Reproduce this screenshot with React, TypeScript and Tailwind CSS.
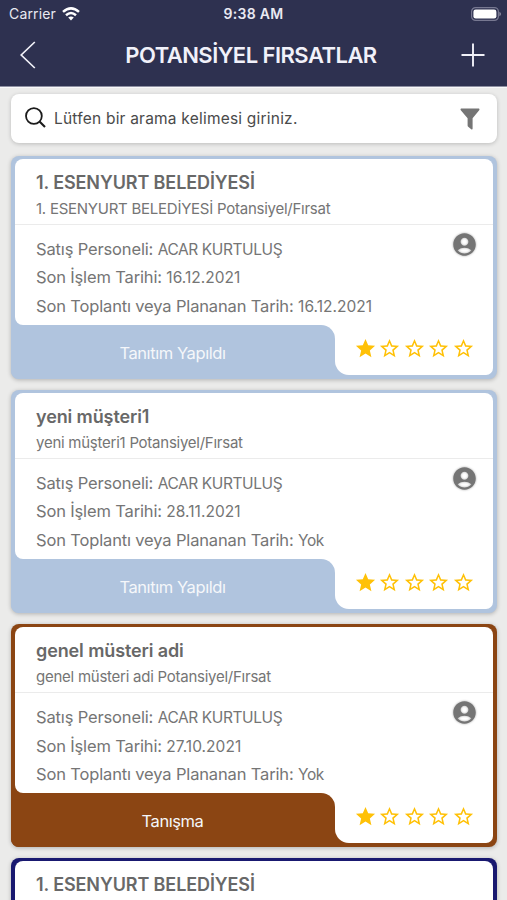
import { MdAccountCircle, MdStar, MdStarBorder } from 'react-icons/md';

type Opportunity = {
  title: string;
  person?: string;
  lastAction?: string;
  meeting?: string;
  status?: string;
  color: string;
};

const opportunities: Opportunity[] = [
  {
    title: '1. ESENYURT BELEDİYESİ',
    person: 'ACAR KURTULUŞ',
    lastAction: '16.12.2021',
    meeting: '16.12.2021',
    status: 'Tanıtım Yapıldı',
    color: 'bg-[#b0c4de]',
  },
  {
    title: 'yeni müşteri1',
    person: 'ACAR KURTULUŞ',
    lastAction: '28.11.2021',
    meeting: 'Yok',
    status: 'Tanıtım Yapıldı',
    color: 'bg-[#b0c4de]',
  },
  {
    title: 'genel müsteri adi',
    person: 'ACAR KURTULUŞ',
    lastAction: '27.10.2021',
    meeting: 'Yok',
    status: 'Tanışma',
    color: 'bg-[#8b4513]',
  },
  {
    title: '1. ESENYURT BELEDİYESİ',
    color: 'bg-[#191970]',
  },
];

function StatusBar() {
  return (
    <div className="relative flex h-[27px] items-center justify-between pl-[9px] pr-[6px] text-[14px] text-[#e9e9f2]">
      <div className="flex items-center gap-[6px]">
        <span className="tracking-[0.15px]">Carrier</span>
        <svg className="h-[14px] w-[18px]" viewBox="0 0 18 14" fill="none" stroke="white" strokeWidth="2.5">
          <path d="M1 4.9Q9-2.1 17 4.9" />
          <path d="M4 8.2Q9 3.8 14 8.2" />
          <path d="M9 13.5L6.2 10.6Q9 8.5 11.8 10.6Z" fill="white" stroke="none" />
        </svg>
      </div>
      <span className="absolute inset-x-0 text-center font-semibold tracking-[0.3px]">9:38 AM</span>
      <svg className="h-[14px] w-[30px]" viewBox="0 0 30 14">
        <rect x="0.6" y="0.6" width="26.8" height="12.8" rx="4" fill="none" stroke="#777891" strokeWidth="1.2" />
        <rect x="2.4" y="2.4" width="23" height="9.2" rx="2.3" fill="white" />
        <path d="M28.4 4.7Q30 5.4 30 7T28.4 9.3Z" fill="#8c8ca2" />
      </svg>
    </div>
  );
}

function Header() {
  return (
    <header className="h-[86px] bg-[#2e3150] shadow-[0_1px_0_#8e90a2,0_2px_0_#f8f8fa]">
      <StatusBar />
      <div className="flex h-[56px] items-center justify-between pl-[20px] pr-[22px]">
        <svg className="h-[28px] w-[16px]" viewBox="0 0 16 28" fill="none" stroke="#f1f1f8" strokeWidth="1.7">
          <path d="M14.8 1L1.2 14L14.8 27" />
        </svg>
        <h1 className="pl-[5px] text-[22px] font-semibold tracking-[-0.53px] text-[#f1f1fa]">POTANSİYEL FIRSATLAR</h1>
        <svg className="h-[24px] w-[24px]" viewBox="0 0 24 24" stroke="#f1f1f8" strokeWidth="1.9">
          <path d="M12 0.5V23.5M0.5 12H23.5" />
        </svg>
      </div>
    </header>
  );
}

function SearchBar() {
  return (
    <div className="ml-[11px] mr-[10px] mt-[8px] flex h-[49px] items-center rounded-[8px] bg-white pl-[14px] pr-[17px] shadow-[0_1px_4px_rgba(0,0,0,0.2)]">
      <svg className="-mt-[3px] h-[21px] w-[21px]" viewBox="0 0 21 21" fill="none" stroke="#1b1b1b" strokeWidth="1.8">
        <circle cx="8.9" cy="9" r="7.9" />
        <path d="M14.5 14.6L20 20" strokeWidth="2.1" />
      </svg>
      <span className="ml-[8px] flex-1 text-[15.5px] tracking-[0.21px] text-[#4a4a4a]">
        Lütfen bir arama kelimesi giriniz.
      </span>
      <svg className="h-[22px] w-[20px]" viewBox="0 0 20 22" fill="#757575">
        <path d="M1 0.5H19Q20 1 19.2 2.2L12.6 10.2V20.8Q12.4 22 11.2 21.2L8.2 18.8Q7.6 18.3 7.6 17.5V10.2L0.8 2.2Q0 1 1 0.5Z" />
      </svg>
    </div>
  );
}

function InfoRow({ label, value }: { label: string; value?: string }) {
  // Tarihler isimlerden biraz daha aralıklı
  const isDate = /^\d/.test(value ?? '');
  return (
    <p className="h-[28.3px] whitespace-nowrap text-[16.5px] leading-[28px] tracking-[-0.15px]">
      {label}:{' '}
      <span className={isDate ? 'text-[15.5px] tracking-[0.03px]' : 'text-[15.5px] tracking-[-0.42px]'}>{value}</span>
    </p>
  );
}

function Rating({ value }: { value: number }) {
  return (
    <div className="-mt-[3px] flex gap-[1.5px] text-[#ffc107]">
      {[1, 2, 3, 4, 5].map((n) =>
        n <= value ? (
          <MdStar key={n} className="h-[23px] w-[23px]" />
        ) : (
          <MdStarBorder key={n} className="h-[23px] w-[23px]" />
        )
      )}
    </div>
  );
}

function OpportunityCard({ item }: { item: Opportunity }) {
  return (
    <article
      className={`h-[223.5px] shrink-0 overflow-hidden rounded-[8px] pl-[4px] pr-[3.5px] pt-[3px] text-[#757575] shadow-[0_1px_4px_rgba(0,0,0,0.25)] ${item.color}`}
    >
      <div className="h-[166.5px] rounded-t-[8px] rounded-bl-[8px] bg-white">
        <div className="h-[66.5px] border-b border-[#ebebeb] pl-[21px] pt-[10px]">
          <h2 className="h-[27.5px] text-[18px] font-semibold leading-[28px] tracking-[-0.11px] text-[#686868]">
            {item.title}
          </h2>
          {item.person && (
            <p className="text-[15px] leading-[26px] tracking-[-0.25px]">{item.title} Potansiyel/Fırsat</p>
          )}
        </div>
        {item.person && (
          <div className="flex justify-between pl-[21px] pr-[15px] pt-[10px]">
            <div>
              <InfoRow label="Satış Personeli" value={item.person} />
              <InfoRow label="Son İşlem Tarihi" value={item.lastAction} />
              <InfoRow label="Son Toplantı veya Plananan Tarih" value={item.meeting} />
            </div>
            <MdAccountCircle className="-mt-[4px] h-[27px] w-[27px] text-[#757575] drop-shadow-[0_0_1px_rgba(0,0,0,0.35)]" />
          </div>
        )}
      </div>
      {/* Durum ve puan */}
      {item.status && (
        <div className="flex h-[50px] bg-white">
          <div
            className={`-ml-[4px] flex h-[54px] w-[324px] items-center justify-center rounded-tr-[14px] pr-[1px] pt-[2px] text-[16.5px] tracking-[-0.42px] text-[#f5f7fa] ${item.color}`}
          >
            {item.status}
          </div>
          <div className={`flex-1 ${item.color}`}>
            <div className="flex h-[50px] items-center justify-center rounded-bl-[14px] rounded-br-[7px] bg-white">
              <Rating value={1} />
            </div>
          </div>
        </div>
      )}
    </article>
  );
}

export default function App() {
  return (
    <div className="h-[900px] w-[507px] overflow-hidden bg-[#ebebea] font-['Inter','Liberation_Sans',sans-serif]">
      <Header />
      <SearchBar />
      <main className="ml-[11px] mr-[10.5px] mt-[12.5px] flex flex-col gap-[10.7px]">
        {opportunities.map((item, i) => (
          <OpportunityCard key={i} item={item} />
        ))}
      </main>
    </div>
  );
}
